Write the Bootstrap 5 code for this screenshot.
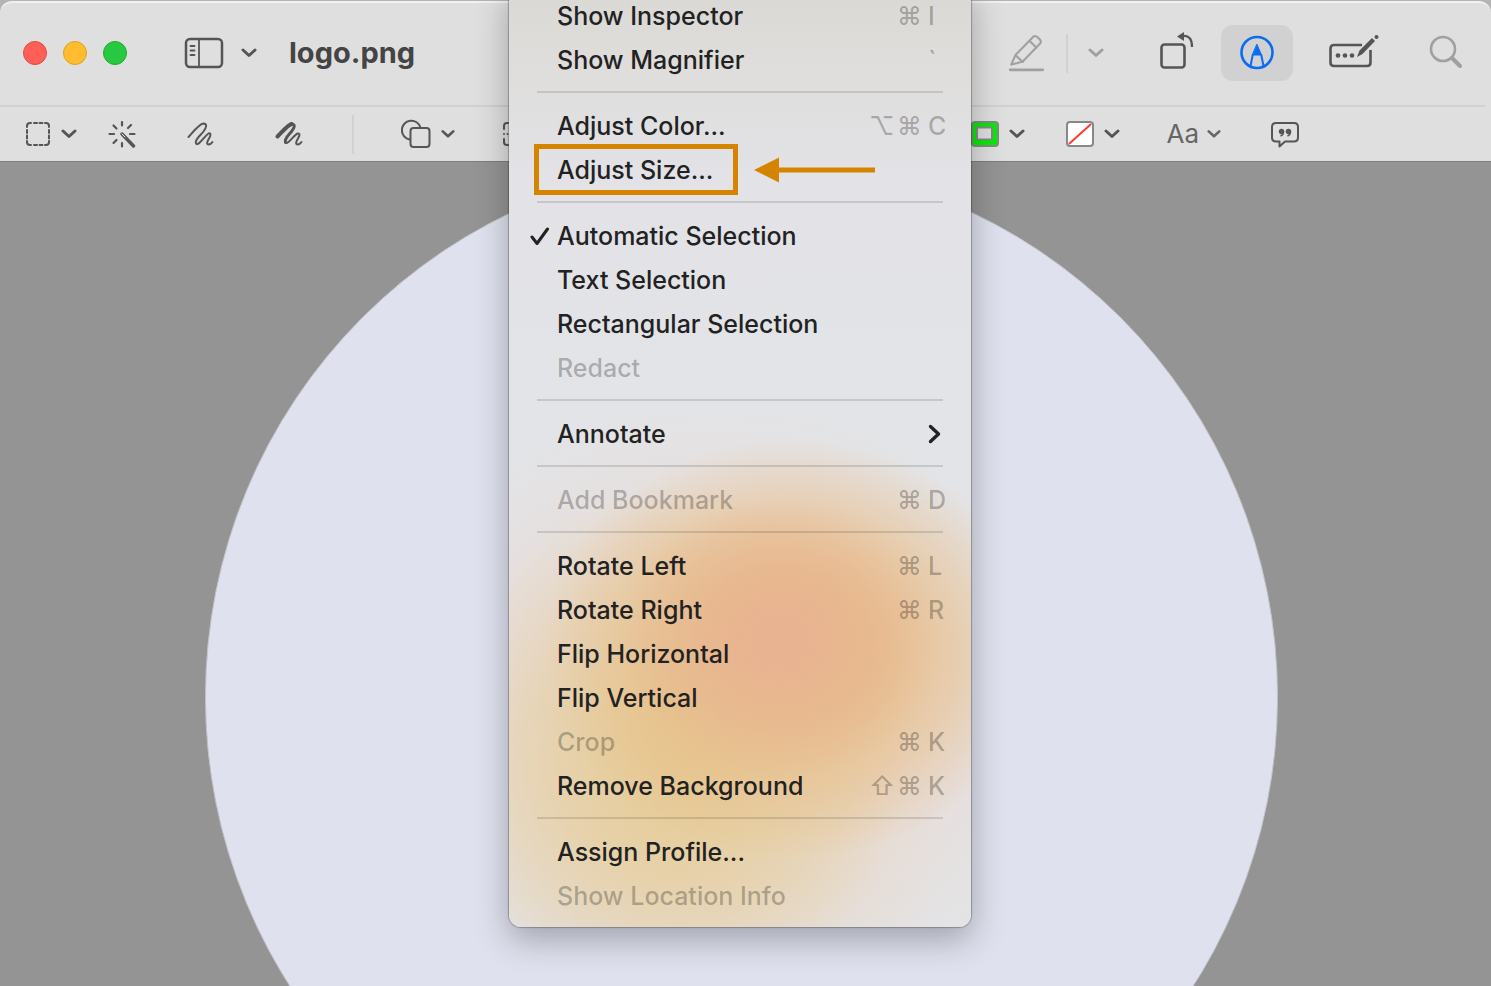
<!DOCTYPE html>
<html lang="en">
<head>
<meta charset="utf-8">
<meta name="viewport" content="width=device-width, initial-scale=1">
<title>logo.png</title>
<link href="https://cdn.jsdelivr.net/npm/bootstrap@5.3.0/dist/css/bootstrap.min.css" rel="stylesheet">
<style>
  body { font-family: Inter, "Liberation Sans", sans-serif; background: #b5b4b5; overflow: hidden; }
  svg { display: block; flex: none; fill: none; stroke: currentColor; stroke-width: 2; stroke-linecap: round; stroke-linejoin: round; }
  .window-head { background: #dfdfdf; color: #555; margin-top: 1px; border-top: 2px solid #f1f1f1; border-bottom: 1px solid #7e7e7e; border-radius: 12px 12px 0 0; }
  .title-bar { height: 102px; padding: 0 27px 2px 23px; }
  .title-rule { height: 2px; background: #d1d1d1; margin-right: 6px; }
  .markup-bar { height: 54px; padding: 0 192px 0 25px; }
  .tool { display: flex; align-items: center; gap: 10px; padding: 0; border: 0; background: none; color: inherit; flex: none; }
  .light { width: 24px; height: 24px; border-radius: 50%; border: 1px solid; padding: 0; }
  .light-close { background: #ff5f57; border-color: #e2483f; }
  .light-min { background: #febc2e; border-color: #dfa023; }
  .light-max { background: #28c840; border-color: #1dad2b; }
  .file-name { font-size: 29px; line-height: 36px; font-weight: 700; color: #444; margin: 0 0 0 32px; }
  .rule-v { width: 2px; height: 39px; background: #d1d1d1; flex: none; }
  .faded { color: #a0a0a0; }
  .tool-sidebar { margin-left: 57px; gap: 17px; }
  .highlight-set { gap: 20px; }
  .tool-rotate { margin-left: 55px; }
  .tool-active { margin-left: 26px; width: 72px; height: 56px; border-radius: 12px; background: #d1d1d1; color: #0a6cf5; justify-content: center; }
  .tool-form { margin-left: 35px; }
  .tool-search { margin-left: 48px; }
  .tool-alpha { margin-left: 31px; }
  .tool-sketch { margin-left: 51px; }
  .tool-draw { margin-left: 59px; }
  .shape-set { margin-left: 47px; gap: 47px; }
  .style-set { gap: 41px; }
  .text-style { font-size: 26px; line-height: 32px; color: #666; margin-left: 5px; gap: 8px; }
  .tool-note { margin-left: 9px; }
  .canvas { background: #949494; padding-right: 8px; min-height: 0; overflow: hidden; }
  .disc { width: 72vw; height: 72vw; margin-top: -2px; flex: none; border-radius: 50%; background: #dfe1ee; border: 1px solid #c3c4ca; }
  .tools-menu {
    top: -16px; left: 509px; width: 462px; padding: 10px 0 9px; border: 0; border-radius: 12px;
    background:
      radial-gradient(ellipse 160px 140px at 270px 655px, #e8b391 15%, #e8b39100 100%),
      radial-gradient(ellipse 250px 210px at 285px 665px, #e8bf8b 30%, #e8bf8b90 65%, #e8bf8b00 100%),
      radial-gradient(ellipse 230px 260px at 170px 760px, #e6cb94 10%, #e6cb9400 100%),
      radial-gradient(ellipse 330px 260px at 160px 840px, #e6d6b8b0 10%, #e6d6b800 85%),
      radial-gradient(ellipse 350px 310px at 210px 730px, #e8dcd7 50%, #e8dcd700 100%),
      linear-gradient(#d9d8d4, #dfdedc 90px, #e2e2e7 190px, #e3e4e7 400px);
    box-shadow: 0 0 1px 1px #00000042, 0 12px 34px #0000004a;
  }
  .tools-menu .dropdown-item { height: 44px; padding: 0 22px 0 48px; font-size: 25px; font-weight: 450; line-height: 44px; color: #222; display: flex; align-items: center; }
  .tools-menu .dropdown-item:disabled, .tools-menu .keys { color: #00000045; }
  .tools-menu .dropdown-divider { margin: 9px 28px 11px; border-top: 2px solid #00000020; opacity: 1; }
  .keys { display: flex; margin-left: auto; }
  .keys span { width: 28px; }
  .keys span:last-child { width: 21px; margin-left: 3px; }
  .tick { left: 21px; top: 12px; }
  .callout-box { left: 25px; top: -4px; width: 204px; height: 51px; border: 5px solid #d58400; pointer-events: none; }
  .callout-arrow { left: 245px; top: 9px; }
</style>
</head>
<body class="vh-100 d-flex flex-column">
<svg width="0" height="0" class="position-absolute" aria-hidden="true">
  <symbol id="chev" viewBox="0 0 16 10"><path d="M2 2l6 5.500 6-5.500" stroke-width="3"/></symbol>
</svg>

<header class="window-head">
  <div class="title-bar d-flex align-items-center">
    <div class="d-flex gap-3">
      <button class="light light-close" aria-label="Close"></button>
      <button class="light light-min" aria-label="Minimize"></button>
      <button class="light light-max" aria-label="Zoom"></button>
    </div>
    <button class="tool tool-sidebar" aria-label="Sidebar">
      <svg width="40" height="32" viewBox="0 0 40 32"><rect x="2" y="2" width="36" height="28" rx="4" stroke-width="2.500"/><path d="M15 2v28M6.500 9h4M6.500 13.500h4M6.500 18h4" stroke-width="1.800"/></svg>
      <svg width="16" height="10"><use href="#chev"/></svg>
    </button>
    <h1 class="file-name">logo.png</h1>
    <div class="d-flex align-items-center ms-auto">
      <div class="highlight-set d-flex align-items-center faded">
        <button class="tool" aria-label="Highlight">
          <svg width="38" height="40" viewBox="0 0 36 38"><path d="M2 35h31" stroke-width="2.500"/><path d="M3 30l4-9L24 3.500q2-1.500 4 .5l2.500 2.500q1.500 2-.5 4L14 27l-5 1.500zM20.500 7.500l6.500 6.500M7 21l7 6.500M3 30l4-1"/></svg>
        </button>
        <span class="rule-v"></span>
        <button class="tool" aria-label="Highlight color"><svg width="16" height="10"><use href="#chev"/></svg></button>
      </div>
      <button class="tool tool-rotate" aria-label="Rotate">
        <svg width="36" height="42" viewBox="0 0 36 42"><rect x="2.500" y="12.500" width="23" height="23" rx="3" stroke-width="2.600"/><path d="M24 4q9-1 9 11" stroke-width="2.300" stroke-linecap="butt"/><path d="M18 4.500L25 0v9z" fill="currentColor" stroke-width="0"/></svg>
      </button>
      <button class="tool tool-active" aria-label="Markup">
        <svg width="36" height="36" viewBox="0 0 36 36"><circle cx="18" cy="17.500" r="15.500" stroke-width="2.600"/><path d="M11.500 31L13.700 20M24.500 31L22.300 20" stroke-width="2"/><path d="M18 9.500l4.500 10.500h-9z" fill="currentColor" stroke-width="1"/></svg>
      </button>
      <button class="tool tool-form" aria-label="Form filling">
        <svg width="52" height="36" viewBox="0 1 52 36"><path d="M34 11H6q-3.500 0-3.500 3.500v14Q2.500 32 6 32h33q3.500 0 3.500-3.500V16" stroke-width="2.600" stroke-linecap="butt"/><g fill="currentColor" stroke="none"><circle cx="10" cy="21.500" r="2.300"/><circle cx="17" cy="21.500" r="2.300"/><circle cx="24" cy="21.500" r="2.300"/><circle cx="48.500" cy="3" r="2"/><path d="M29 23l2.500-6.500L44 4l3 3L34.500 20z"/></g></svg>
      </button>
      <button class="tool tool-search faded" aria-label="Search">
        <svg width="36" height="36" viewBox="0 1 36 36"><circle cx="15" cy="15" r="12" stroke-width="2.600"/><path d="M24 24l8 8" stroke-width="4"/></svg>
      </button>
    </div>
  </div>
  <div class="title-rule"></div>
  <div class="markup-bar d-flex align-items-center">
    <button class="tool" aria-label="Selection tools">
      <svg width="26" height="26" viewBox="0 0 26 26" stroke-linecap="butt"><path d="M2 6V5q0-3 3-3h1M20 2h1q3 0 3 3v1M24 20v1q0 3-3 3h-1M6 24H5q-3 0-3-3v-1M9 2h3M14.500 2h3M9 24h3M14.500 24h3M2 9v3M2 14.500v3M24 9v3M24 14.500v3"/></svg>
      <svg width="16" height="10"><use href="#chev"/></svg>
    </button>
    <button class="tool tool-alpha" aria-label="Instant alpha">
      <svg width="28" height="28" viewBox="0 0 28 28"><path d="M14 2v3.500M14 23v3.500M1.500 14h4.500M22 14h4.500M5.500 5.500l3 3M23 5l-3 3M5.500 23l3-3" stroke-width="2.200"/><path d="M14 14l11.500 12" stroke-width="3.400"/><path d="M14 14l3 3" stroke="#dfdfdf" stroke-width="1"/></svg>
    </button>
    <button class="tool tool-sketch" aria-label="Sketch">
      <svg width="28" height="28" viewBox="0 0 28 28"><path d="M1.500 17C6 12 12 4 16.500 3.500c4 0 3 4 0 8S7 20 9 23.500s9-8 12.500-10c3-1 2 2.500.5 5s-3 5.500-.5 6c2 0 3-1 4-2.500"/></svg>
    </button>
    <button class="tool tool-draw" aria-label="Draw">
      <svg width="30" height="28" viewBox="0 0 30 28"><path d="M3.500 16.500C9 11 14 5 17.500 4" stroke-width="4"/><path d="M17 4c5 0 3.500 4 .5 7.500S10 19 11.500 22.500" stroke-width="3"/><path d="M11.500 22.500c2 3 9-8 12-9 3-.5 2 2.500.5 5s-3 5.500-.5 6c2 0 3-1 4-2.500"/></svg>
    </button>
    <span class="rule-v ms-5"></span>
    <div class="shape-set d-flex align-items-center">
      <button class="tool" aria-label="Shapes">
        <svg width="30" height="30" viewBox="0 0 30 30"><path d="M8.500 20.500A9.500 9.500 0 1 1 19.500 8.500"/><rect x="9.500" y="9" width="19" height="19" rx="3"/></svg>
        <svg width="14" height="10" viewBox="0 0 16 10"><use href="#chev"/></svg>
      </button>
      <button class="tool" aria-label="Text frame">
        <svg width="26" height="26" viewBox="0 0 26 26"><path d="M6 2H5Q2 2 2 5v3M2 13v.1M2 18v3q0 3 3 3h1M5.500 13v.1"/></svg>
      </button>
    </div>
    <div class="style-set d-flex align-items-center ms-auto">
      <button class="tool" aria-label="Border color">
        <svg width="28" height="26" viewBox="0 0 28 26"><rect x="1" y="1" width="26" height="24" rx="3" fill="#00f000" stroke="#888"/><rect x="6" y="6.500" width="15" height="12" fill="#dfdfdf" stroke="#888"/></svg>
        <svg width="16" height="10"><use href="#chev"/></svg>
      </button>
      <button class="tool" aria-label="Fill color">
        <svg width="28" height="26" viewBox="0 0 28 26"><rect x="1" y="1" width="26" height="24" rx="3" fill="#fff" stroke="#888"/><path d="M3.500 22.500L24.500 3.500" stroke="#ff3b30"/></svg>
        <svg width="16" height="10"><use href="#chev"/></svg>
      </button>
      <button class="tool text-style" aria-label="Text style">Aa
        <svg width="14" height="10" viewBox="0 0 16 10"><use href="#chev"/></svg>
      </button>
      <button class="tool tool-note" aria-label="Note">
        <svg width="28" height="28" viewBox="0 0 28 28"><path d="M5 3h18q4 0 4 4v10.500q0 4-4 4H14l-5.500 5v-5H5q-4 0-4-4V7q0-4 4-4z"/><g fill="currentColor" stroke="none"><circle cx="10.500" cy="11.500" r="2.700"/><circle cx="17.500" cy="11.500" r="2.700"/></g><path d="M12.500 11.500q0 3.500-2.500 4.300M19.500 11.500q0 3.500-2.500 4.300" stroke-width="1.500"/></svg>
      </button>
    </div>
  </div>
</header>

<main class="canvas flex-grow-1 d-flex justify-content-center align-items-start">
  <div class="disc"></div>
</main>

<ul class="dropdown-menu show tools-menu position-absolute">
  <li><button class="dropdown-item">Show Inspector<span class="keys"><span>⌘</span><span>I</span></span></button></li>
  <li><button class="dropdown-item">Show Magnifier<span class="keys"><span>`</span></span></button></li>
  <li><hr class="dropdown-divider"></li>
  <li><button class="dropdown-item">Adjust Color...<span class="keys"><span>⌥</span><span>⌘</span><span>C</span></span></button></li>
  <li class="position-relative">
    <button class="dropdown-item">Adjust Size...</button>
    <span class="callout-box position-absolute"></span>
    <svg class="callout-arrow position-absolute" width="121" height="26" viewBox="0 0 121 26"><path d="M24 13h97" stroke="#d58400" stroke-width="5" stroke-linecap="butt"/><path d="M0 13L25 .5v25z" fill="#d58400" stroke="none"/></svg>
  </li>
  <li><hr class="dropdown-divider"></li>
  <li class="position-relative">
    <svg class="tick position-absolute" width="20" height="20" viewBox="0 0 20 20"><path d="M2 11l5 6.500L17.500 3" stroke="#222" stroke-width="3"/></svg>
    <button class="dropdown-item">Automatic Selection</button>
  </li>
  <li><button class="dropdown-item">Text Selection</button></li>
  <li><button class="dropdown-item">Rectangular Selection</button></li>
  <li><button class="dropdown-item" disabled>Redact</button></li>
  <li><hr class="dropdown-divider"></li>
  <li><button class="dropdown-item">Annotate
    <svg class="ms-auto" width="22" height="22" viewBox="0 0 22 22"><path d="M3.500 3.500l8 7.500-8 7.500" stroke="#222" stroke-width="3.400"/></svg></button></li>
  <li><hr class="dropdown-divider"></li>
  <li><button class="dropdown-item" disabled>Add Bookmark<span class="keys"><span>⌘</span><span>D</span></span></button></li>
  <li><hr class="dropdown-divider"></li>
  <li><button class="dropdown-item">Rotate Left<span class="keys"><span>⌘</span><span>L</span></span></button></li>
  <li><button class="dropdown-item">Rotate Right<span class="keys"><span>⌘</span><span>R</span></span></button></li>
  <li><button class="dropdown-item">Flip Horizontal</button></li>
  <li><button class="dropdown-item">Flip Vertical</button></li>
  <li><button class="dropdown-item" disabled>Crop<span class="keys"><span>⌘</span><span>K</span></span></button></li>
  <li><button class="dropdown-item">Remove Background<span class="keys"><span>⇧</span><span>⌘</span><span>K</span></span></button></li>
  <li><hr class="dropdown-divider"></li>
  <li><button class="dropdown-item">Assign Profile...</button></li>
  <li><button class="dropdown-item" disabled>Show Location Info</button></li>
</ul>
<script src="https://cdn.jsdelivr.net/npm/bootstrap@5.3.0/dist/js/bootstrap.bundle.min.js"></script>
</body>
</html>
